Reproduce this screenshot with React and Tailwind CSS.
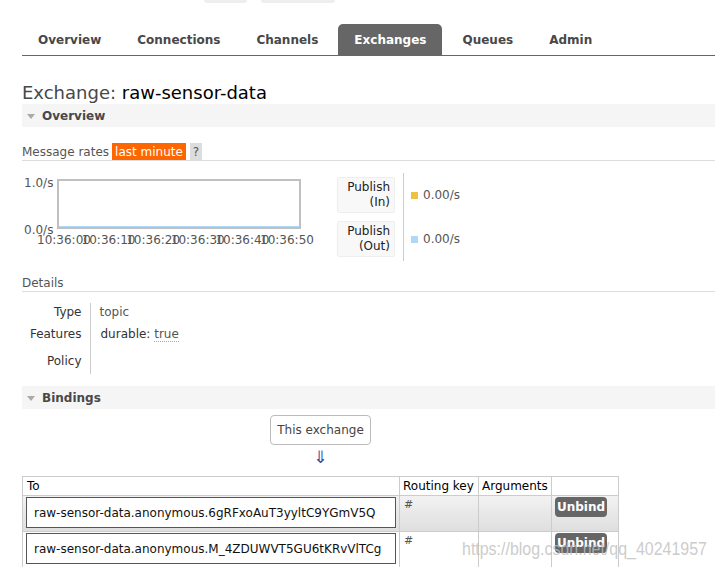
import React from 'react';

const tabs = ['Overview', 'Connections', 'Channels', 'Exchanges', 'Queues', 'Admin'];
const times = ['10:36:00', '10:36:10', '10:36:20', '10:36:30', '10:36:40', '10:36:50'];

const SectionHeader = ({ title }) => (
  <div className="flex h-[23px] items-center bg-[#f5f5f5] pl-[5px]">
    <span className="mr-[7px] mt-[1px] h-0 w-0 border-x-[4px] border-t-[5px] border-x-transparent border-t-[#aaa]"></span>
    <span className="text-[12px] font-bold text-[#484848]">{title}</span>
  </div>
);

const LegendBox = ({ label, sub }) => (
  <div className="flex h-[36px] w-[58px] flex-col items-end justify-center rounded-[2px] border border-[#eee] bg-[#f8f8f8] pr-[4px] text-[12px] leading-[15px] text-[#222]">
    <span>{label}</span>
    <span>{sub}</span>
  </div>
);

const BindingRow = ({ name, shaded }) => (
  <tr className={shaded ? 'bg-gradient-to-b from-[#f2f2f2] to-[#dedede]' : 'bg-white'}>
    <td className="h-[36px] border border-[#ccc] px-[3px] pt-[1px] align-top">
      <div className="flex h-[31px] items-center border-[1.5px] border-[#555] bg-white pl-[7px] text-[12px] text-[#111]">{name}</div>
    </td>
    <td className="border border-[#ccc] px-[4px] pt-[2px] align-top text-[11px] leading-[14px] text-[#555]">#</td>
    <td className="border border-[#ccc]"></td>
    <td className="border border-[#ccc] px-[3px] pt-[1px] align-top">
      <span className="inline-flex h-[20px] w-[52px] items-center justify-center rounded-[4px] bg-[#666] text-[12px] font-bold text-white">Unbind</span>
    </td>
  </tr>
);

export default function App() {
  return (
    <div className="relative h-[567px] w-[715px] overflow-hidden bg-white font-['DejaVu_Sans',Verdana,sans-serif] text-[12px] text-[#484848]">
      {/* cut-off buttons at the very top */}
      <div className="flex h-[24px] items-start pl-[204px]">
        <div className="h-[3px] w-[43px] rounded-b-[4px] bg-[#eee]"></div>
        <div className="ml-[14px] h-[3px] w-[74px] rounded-b-[4px] bg-[#eee]"></div>
      </div>

      {/* tabs */}
      <div className="ml-[22px] flex h-[32px] items-end border-b border-[#666]">
        {tabs.map((t) => (
          <div
            key={t}
            className={
              'mr-[4px] flex h-[31px] items-center px-4 pt-[1px] text-[12px] font-bold ' +
              (t === 'Exchanges' ? 'rounded-t-[5px] bg-[#666] text-white' : 'text-[#484848]')
            }
          >
            {t}
          </div>
        ))}
      </div>

      <div className="ml-[22px]">
        <h1 className="mt-[26px] h-[22px] text-[18px] leading-[22px] text-[#484848]">
          Exchange: <span className="text-black">raw-sensor-data</span>
        </h1>

        <SectionHeader title="Overview" />

        {/* message rates */}
        <div className="mt-[16px] flex h-[18px] items-center border-b border-[#ddd]">
          <span className="mr-[3px] text-[#555]">Message rates</span>
          <span className="flex h-[17px] items-center bg-[#ff6600] px-[3px] text-white">last minute</span>
          <span className="ml-[4px] flex h-[17px] items-center bg-[#ddd] px-[3px] text-[#555]">?</span>
        </div>

        <div className="mt-[12px] flex">
          <div className="relative h-[74px] w-[300px]">
            <span className="absolute left-[2px] top-[1px] text-[#545454]">1.0/s</span>
            <span className="absolute left-[2px] top-[48px] text-[#545454]">0.0/s</span>
            <div className="absolute left-[35px] top-[6px] h-[50px] w-[244px] border-2 border-[#c0c0c0] bg-white">
              <div className="absolute bottom-0 left-0 h-[1px] w-full bg-[#afd8f8]"></div>
            </div>
            {times.map((t, i) => (
              <span key={t} className="absolute top-[58px] text-[12px] text-[#545454]" style={{ left: 15 + i * 44.6 }}>
                {t}
              </span>
            ))}
          </div>
          <div className="ml-[15px] mt-[4px] flex flex-col gap-[8px]">
            <LegendBox label="Publish" sub="(In)" />
            <LegendBox label="Publish" sub="(Out)" />
          </div>
          <div className="ml-[8px] h-[88px] border-l border-[#ccc]"></div>
          <div className="ml-[7px] mt-[4px] flex flex-col gap-[8px]">
            <div className="flex h-[36px] items-center text-[#555]">
              <span className="mr-[5px] h-[7px] w-[7px] bg-[#edc240]"></span>0.00/s
            </div>
            <div className="flex h-[36px] items-center text-[#555]">
              <span className="mr-[5px] h-[7px] w-[7px] bg-[#afd8f8]"></span>0.00/s
            </div>
          </div>
        </div>

        {/* details */}
        <div className="mt-[13px] h-[18px] border-b border-[#ddd] text-[#555]">Details</div>
        <table className="mt-[11px] border-collapse">
          <tbody>
            <tr>
              <th className="h-[17px] w-[68px] border-r border-[#ccc] pr-[8px] text-right font-normal text-[#333]">Type</th>
              <td className="pl-[9px] text-[#555]">topic</td>
            </tr>
            <tr>
              <th className="h-[26px] border-r border-[#ccc] pr-[8px] text-right font-normal text-[#333]">Features</th>
              <td className="pl-[10px] text-[#333]">
                durable: <span className="border-b border-dotted border-[#aaa] text-[#555]">true</span>
              </td>
            </tr>
            <tr>
              <th className="h-[27px] border-r border-[#ccc] pr-[8px] text-right font-normal text-[#333]">Policy</th>
              <td></td>
            </tr>
          </tbody>
        </table>

        <div className="mt-[12px]">
          <SectionHeader title="Bindings" />
        </div>

        {/* bindings */}
        <div className="w-[597px]">
          <div className="mt-[6px] flex flex-col items-center">
            <div className="flex h-[30px] w-[101px] items-center justify-center rounded-[4px] border border-[#bbb] text-[#444]">
              This exchange
            </div>
            <div className="mt-[2px] text-[17px] leading-[20px] text-[#3a4a9c]">⇓</div>
          </div>
          <table className="mt-[9px] w-[597px] border-collapse text-left">
            <thead>
              <tr className="bg-white">
                <th className="h-[18px] w-[377px] border border-[#ccc] px-[4px] font-normal text-black">To</th>
                <th className="w-[79px] border border-[#ccc] px-[3px] font-normal text-black">Routing key</th>
                <th className="w-[73px] border border-[#ccc] px-[3px] font-normal text-black">Arguments</th>
                <th className="border border-[#ccc]"></th>
              </tr>
            </thead>
            <tbody>
              <BindingRow shaded name="raw-sensor-data.anonymous.6gRFxoAuT3yyltC9YGmV5Q" />
              <BindingRow name="raw-sensor-data.anonymous.M_4ZDUWVT5GU6tKRvVlTCg" />
            </tbody>
          </table>
        </div>
      </div>

      {/* watermark */}
      <div className="pointer-events-none absolute left-[462px] top-[538px] origin-left scale-x-[0.84] whitespace-nowrap font-['Liberation_Sans',Arial,sans-serif] text-[19px] leading-[22px] text-[rgba(190,190,190,0.8)]">
        https://blog.csdn.net/qq_40241957
      </div>
    </div>
  );
}
